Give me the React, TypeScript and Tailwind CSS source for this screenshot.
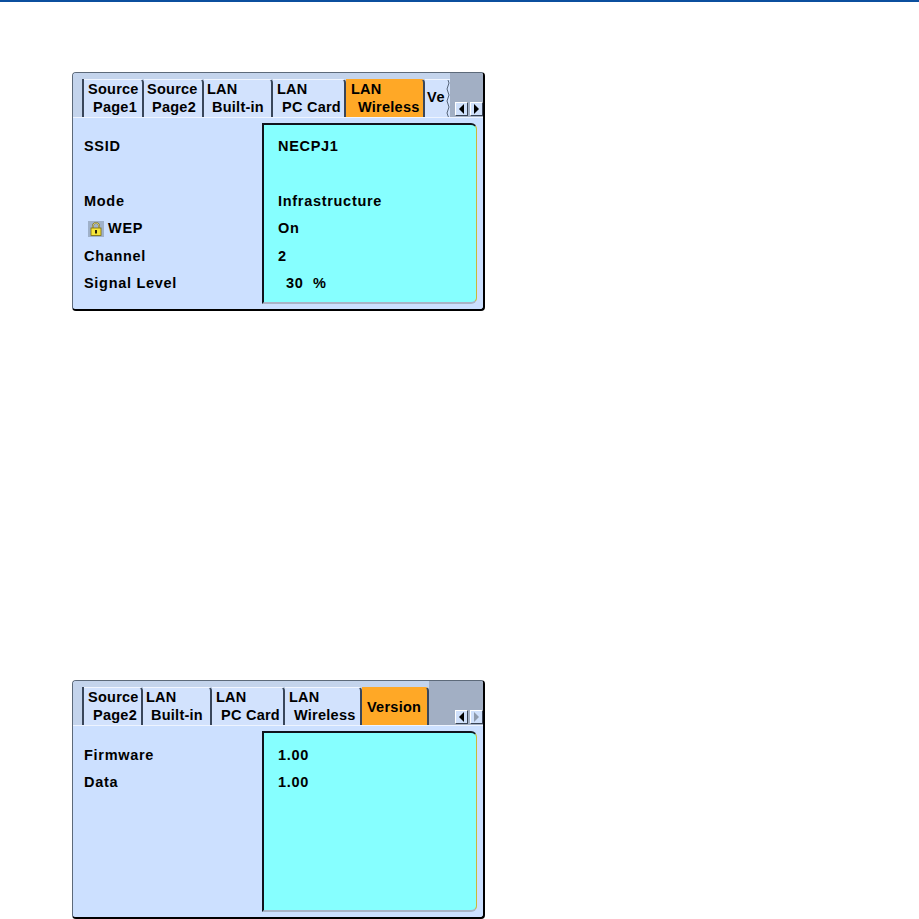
// Projector OSD info pages (LAN Wireless / Version)
type Tab = { first: string; second?: string; firstPad: number; secondPad: number; width: number; active?: boolean };
type Row = { label: string; value: string; lock?: boolean; valuePad?: number; tall?: boolean };

const wirelessTabs: Tab[] = [
  { first: 'Source', second: 'Page1', firstPad: 4, secondPad: 9, width: 60 },
  { first: 'Source', second: 'Page2', firstPad: 3, secondPad: 8, width: 60 },
  { first: 'LAN', second: 'Built-in', firstPad: 3, secondPad: 8, width: 69 },
  { first: 'LAN', second: 'PC Card', firstPad: 4, secondPad: 9, width: 73 },
  { first: 'LAN', second: 'Wireless', firstPad: 5, secondPad: 12, width: 79, active: true },
];

const versionTabs: Tab[] = [
  { first: 'Source', second: 'Page2', firstPad: 4, secondPad: 9, width: 59 },
  { first: 'LAN', second: 'Built-in', firstPad: 3, secondPad: 8, width: 69 },
  { first: 'LAN', second: 'PC Card', firstPad: 4, secondPad: 9, width: 73 },
  { first: 'LAN', second: 'Wireless', firstPad: 4, secondPad: 9, width: 77 },
  { first: 'Version', firstPad: 5, secondPad: 0, width: 67, active: true },
];

const wirelessRows: Row[] = [
  { label: 'SSID', value: 'NECPJ1', tall: true },
  { label: 'Mode', value: 'Infrastructure' },
  { label: 'WEP', value: 'On', lock: true },
  { label: 'Channel', value: '2' },
  { label: 'Signal Level', value: '30  %', valuePad: 8 },
];

const versionRows: Row[] = [
  { label: 'Firmware', value: '1.00' },
  { label: 'Data', value: '1.00' },
];

function LockIcon() {
  return (
    <span className="mr-[4px] ml-[4px] flex h-[16px] w-[16px] items-center justify-center bg-[#9fb1c9]">
      <svg width="12" height="14" viewBox="0 0 12 14">
        <path d="M3 7V4a3 3 0 0 1 6 0v3" fill="none" stroke="#6b5f18" strokeWidth="1.6" />
        <path d="M3 7V4a3 3 0 0 1 6 0v3" fill="none" stroke="#f4ee9a" strokeWidth="0.7" />
        <rect x="1" y="6" width="10" height="7.5" fill="#f5e53a" stroke="#7a6a10" strokeWidth="0.8" />
        <rect x="5" y="8" width="2" height="3.5" fill="#2a2406" />
      </svg>
    </span>
  );
}

function Arrow({ dir, disabled }: { dir: 'left' | 'right'; disabled?: boolean }) {
  return (
    <div className="flex h-[14px] w-[13px] items-center justify-center border-t border-l border-r border-b border-t-white border-l-white border-r-[#3a4454] border-b-[#3a4454] bg-[#cfe0fb]">
      <svg width="7" height="10" viewBox="0 0 7 10">
        <path d={dir === 'left' ? 'M6 0V10L1 5Z' : 'M1 0V10L6 5Z'} fill={disabled ? '#8e9aac' : '#000'} />
      </svg>
    </div>
  );
}

function TabItem({ tab }: { tab: Tab }) {
  return (
    <div
      className={`flex h-[38px] flex-col rounded-tr-[4px] border-r-2 border-t border-r-[#39465a] leading-[18px] tracking-[0.25px] ${
        tab.active ? 'border-t-[#ffa826] bg-[#ffa826]' : 'border-t-[#f0f5ff] bg-[#d2e2fd]'
      } ${tab.second ? '' : 'justify-center'}`}
      style={{ width: tab.width }}
    >
      <span className="whitespace-nowrap" style={{ paddingLeft: tab.firstPad }}>{tab.first}</span>
      {tab.second && <span className="whitespace-nowrap" style={{ paddingLeft: tab.secondPad }}>{tab.second}</span>}
    </div>
  );
}

function Panel({ tabs, rows, clipped, rightDisabled, rowsTop }: { tabs: Tab[]; rows: Row[]; clipped?: boolean; rightDisabled?: boolean; rowsTop: number }) {
  return (
    <div className="h-[239px] w-[413px] overflow-hidden rounded-[4px] border-t border-l border-r-2 border-b-2 border-t-[#5d6a7a] border-l-[#5d6a7a] border-r-black border-b-black bg-[#cce0ff] font-['Liberation_Sans',sans-serif] text-[14.5px] font-bold tracking-[0.7px] text-black">
      {/* Tab strip */}
      <div className="flex h-[45px] border-b border-b-[#eef4ff] bg-[#c4d4ec] pl-[9px]">
        <div className="flex items-end">
          <div className="h-[38px] w-[2px] bg-[#39465a]" />
          {tabs.map((tab) => (
            <TabItem key={tab.first + (tab.second ?? '')} tab={tab} />
          ))}
          {clipped && (
            <div className="relative flex h-[38px] w-[25px] items-center overflow-hidden border-t border-t-[#f0f5ff] bg-[#d2e2fd] pb-[2px] pl-[2px]">
              Ve
              <svg className="absolute top-0 right-0" width="4" height="38" viewBox="0 0 4 38">
                <path d="M2 0Q4 3 2 6T2 12T2 18T2 24T2 30T2 36T2 38" fill="none" stroke="#56657a" strokeWidth="1" />
              </svg>
            </div>
          )}
        </div>
        <div className="flex flex-1 items-end justify-end gap-[2px] bg-[#a2afc4] pb-[1px]">
          <Arrow dir="left" />
          <Arrow dir="right" disabled={rightDisabled} />
        </div>
      </div>
      {/* Body */}
      <div className="flex pt-[5px] pl-[11px]">
        <div className="w-[178px]" style={{ paddingTop: rowsTop }}>
          {rows.map((row) => (
            <div key={row.label} className={`flex ${row.tall ? 'h-[55px] items-start pt-[3px]' : 'h-[27.4px] items-center'}`}>
              {row.lock && <LockIcon />}
              {row.label}
            </div>
          ))}
        </div>
        <div
          className="h-[181px] w-[215px] rounded-tr-[6px] rounded-br-[6px] border-t-2 border-l-2 border-r border-b-2 border-t-[#10141c] border-l-[#10141c] border-r-[#c8b93a] border-b-[#a9b4c6] bg-[#86ffff] pl-[14px]"
          style={{ paddingTop: rowsTop - 2 }}
        >
          {rows.map((row) => (
            <div
              key={row.label}
              className={`flex whitespace-pre ${row.tall ? 'h-[55px] items-start pt-[3px]' : 'h-[27.4px] items-center'}`}
              style={{ paddingLeft: row.valuePad ?? 0 }}
            >
              {row.value}
            </div>
          ))}
        </div>
      </div>
    </div>
  );
}

export default function App() {
  return (
    <div className="h-[919px] w-[919px] overflow-hidden bg-white">
      <div className="h-[2px] bg-[#0b4f9e]" />
      <div className="pt-[70px] pl-[72px]">
        <Panel tabs={wirelessTabs} rows={wirelessRows} clipped rowsTop={10} />
        <div className="h-[369px]" />
        <Panel tabs={versionTabs} rows={versionRows} rightDisabled rowsTop={11} />
      </div>
    </div>
  );
}
